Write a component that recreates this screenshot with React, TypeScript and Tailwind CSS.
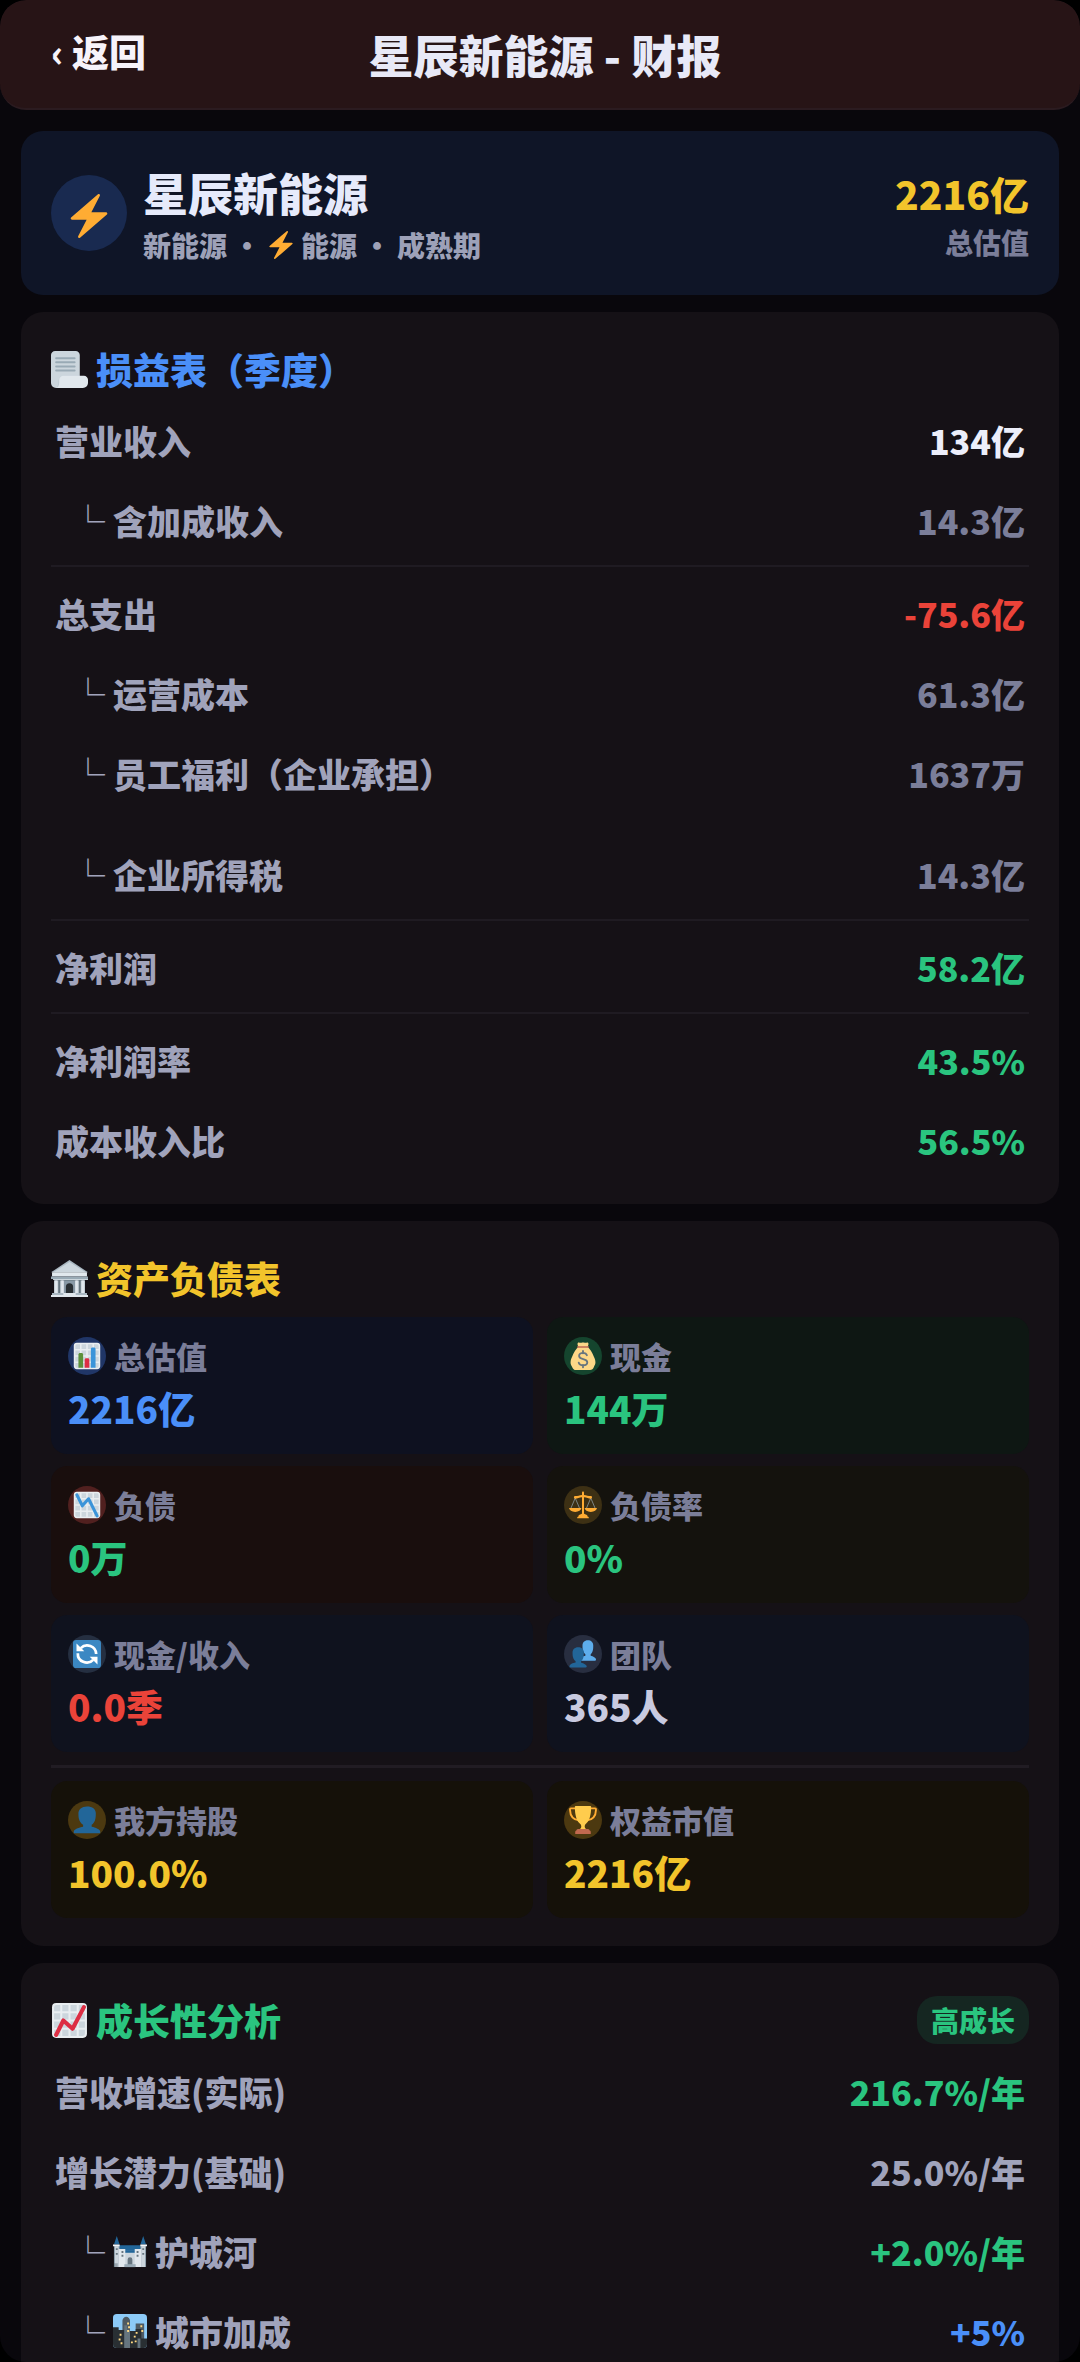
import type { ReactNode } from "react";

type IconProps = { className?: string };

function Svg({ className = "", children }: IconProps & { children: ReactNode }) {
  return (
    <svg viewBox="0 0 36 36" aria-hidden="true" className={`shrink-0 ${className}`}>
      {children}
    </svg>
  );
}

const Bolt = ({ className }: IconProps) => (
  <Svg className={className}>
    <path
      fill="#FFAC33"
      d="M32.938 15.651C32.792 15.26 32.418 15 32 15H19.925L26.89 1.458c.219-.426.106-.947-.271-1.243C26.437.071 26.218 0 26 0c-.233 0-.466.082-.653.243L18 6.588 3.347 19.243c-.316.273-.43.714-.284 1.105S3.582 21 4 21h12.075L9.11 34.542c-.219.426-.106.947.271 1.243.182.144.401.215.619.215.233 0 .466-.082.653-.243L18 29.412l14.653-12.655c.317-.273.43-.714.285-1.106z"
    />
  </Svg>
);

const Scroll = ({ className }: IconProps) => (
  <Svg className={className}>
    <path fill="#CCD6DD" d="M4 0h20c2.200 0 4 1.800 4 4v26H12v6H5c-2.800 0-5-2.200-5-5V4c0-2.200 1.800-4 4-4z" />
    <path fill="#B8C5CD" d="M7 31c0-3.500 2-7 5-7h16v3H12v9H5c1.500-1 2-3 2-5z" opacity=".6" />
    <path fill="#E1E8ED" d="M12 24h20c2.200 0 4 1.800 4 4v3c0 2.800-2.200 5-5 5H5c1.700 0 3-2 3-5v-3c0-2.200 1.800-4 4-4z" />
    <path stroke="#99AAB5" strokeWidth="1.900" strokeLinecap="round" d="M5 7h18M5 11h18M5 15h18M5 19h18" />
  </Svg>
);

const Bank = ({ className }: IconProps) => (
  <Svg className={className}>
    <path fill="#66757F" d="M3 18h30v15H3z" />
    <path fill="#AAB8C2" d="M18 0 0 12h36z" />
    <path fill="#CCD6DD" d="M18 2 2 12h32z" />
    <path fill="#E1E8ED" d="M1 12h34v4H1z" />
    <path fill="#99AAB5" d="M0 16h36v2.500H0z" />
    <path fill="#CCD6DD" d="M2 18.500h34v1H2zM3 20h4v13H3zM9 20h4v13H9zM23 20h4v13h-4zM29 20h4v13h-4z" />
    <path fill="#E1E8ED" d="M4 20h2v13H4zM10 20h2v13h-2zM24 20h2v13h-2zM30 20h2v13h-2z" />
    <path fill="#8899A6" d="M13 20h10v13H13z" />
    <path fill="#292F33" d="M14.500 33v-7a3.500 3.500 0 0 1 7 0v7z" />
    <path fill="#AAB8C2" d="M1 32h34v2H1z" />
    <path fill="#E1E8ED" d="M0 34h36v2H0zM12 32h12v2H12z" />
  </Svg>
);

const Sheet = () => (
  <>
    <rect x="1" y="1" width="34" height="34" rx="4" fill="#E9EEF1" />
    <path
      fill="#CCD6DD"
      d="M3 5a2 2 0 0 1 2-2h4v6H3zM11 3h6v6h-6zM19 3h6v6h-6zM27 3h4a2 2 0 0 1 2 2v4h-6zM3 11h6v6H3zM11 11h6v6h-6zM19 11h6v6h-6zM27 11h6v6h-6zM3 19h6v6H3zM11 19h6v6h-6zM19 19h6v6h-6zM27 19h6v6h-6zM3 27h6v6H5a2 2 0 0 1-2-2zM11 27h6v6h-6zM19 27h6v6h-6zM27 27h6v4a2 2 0 0 1-2 2h-4z"
    />
  </>
);

const BarChart = ({ className }: IconProps) => (
  <Svg className={className}>
    <Sheet />
    <path fill="#5C913B" d="M13 33H7V16c0-1.104.896-2 2-2h2c1.104 0 2 .896 2 2v17z" />
    <path fill="#DD2E44" d="M21 33h-6V23c0-1.104.896-2 2-2h2c1.104 0 2 .896 2 2v10z" />
    <path fill="#3B94D9" d="M29 33h-6V9c0-1.104.896-2 2-2h2c1.104 0 2 .896 2 2v24z" />
  </Svg>
);

const ChartDown = ({ className }: IconProps) => (
  <Svg className={className}>
    <Sheet />
    <path fill="none" stroke="#3B94D9" strokeWidth="4" strokeLinecap="round" strokeLinejoin="round" d="M5 5l7 14 8-9 11 22" />
  </Svg>
);

const ChartUp = ({ className }: IconProps) => (
  <Svg className={className}>
    <Sheet />
    <path fill="none" stroke="#DD2E44" strokeWidth="4" strokeLinecap="round" strokeLinejoin="round" d="M5 32l7-14 9 8L32 5" />
  </Svg>
);

const MoneyBag = ({ className }: IconProps) => (
  <Svg className={className}>
    <path
      fill="#FDD888"
      d="M12 6c-1-2-1.500-4-.500-5 1-1 3 .300 4.500 0 1.300-.300 3-.300 4.200 0 1.500.300 3.300-1 4.300 0 1 1 .5 3-.500 5 3 3 6 7.500 8 13 1 2.500 2 4 2 7.500 0 3-1.500 4-2 5.500-.8 2.500-2.500 3.500-5 4H9c-2.500 0-4-1.500-5-4-.8-1.500-2-2.800-2-5.500 0-3.500 1-5 2-7.500 2-5.500 5-10 8-13z"
    />
    <path fill="#BF6952" d="M11 5.500h14c1 0 1 2 0 2H11c-1 0-1-2 0-2z" />
    <path
      fill="none"
      stroke="#67757F"
      strokeWidth="2.400"
      strokeLinecap="round"
      d="M23 17c-.700-2-2.500-3-5-3-3 0-5 1.600-5 4 0 5.500 10.500 2.500 10.500 8 0 2.400-2.300 4-5.500 4-3 0-5-1.300-5.500-3.500M18 11.500v3M18 29.500v3"
    />
  </Svg>
);

const Scales = ({ className }: IconProps) => (
  <Svg className={className}>
    <path fill="none" stroke="#99AAB5" strokeWidth=".9" d="M8 9 2.500 22M8 9l5.500 13M28 9l-5.500 13M28 9l5.500 13" />
    <path
      fill="#FFAC33"
      d="M16.700 2.500C16.700 1 17.200.500 18 .500s1.300.5 1.300 2V5c3 .2 5.700 1.500 8.700 1.500 2.200 0 2.200 3.500 0 3.500-3 0-5-1.800-8.700-2v21c0 1.300 4.700 1 4.700 4 1 0 1.500.500 1.500 2H10.500c0-1.500.5-2 1.500-2 0-3 4.700-2.700 4.700-4V8C13 8.200 11 10 8 10 5.800 10 5.800 6.500 8 6.500c3 0 5.700-1.300 8.700-1.500zM0 22h16c-.5 3-3.500 5-8 5s-7.500-2-8-5zM20 22h16c-.5 3-3.500 5-8 5s-7.500-2-8-5z"
    />
  </Svg>
);

const Refresh = ({ className }: IconProps) => (
  <Svg className={className}>
    <rect width="36" height="36" rx="4" fill="#3B88C3" />
    <path fill="none" stroke="#fff" strokeWidth="3.500" d="M10 10.500A11.500 11.500 0 0 1 29.800 18M26 25.500A11.500 11.500 0 0 1 6.200 17" />
    <path fill="#fff" d="M4.500 4.500v10h10zM31.500 31.500v-10h-10z" />
  </Svg>
);

const personPath =
  "M24 26.800v-2.600c2-1.400 4-4.200 4.700-7.600.5-1.500.7-4.500.6-7.600C29.300 4 25 .500 18 .500S7 4.500 7 9.500c0 3 .200 5.700.7 7.100.8 3.400 3.300 6.200 5.300 7.600v2.500C8 27.300 1 30 1 33v1c0 1 1 1 2 1h30c1 0 2 0 2-1v-1c0-2.700-6-5.300-11-6.200z";

const Person = ({ className }: IconProps) => (
  <Svg className={className}>
    <path fill="#226699" d={personPath} />
  </Svg>
);

const People = ({ className }: IconProps) => (
  <Svg className={className}>
    <path fill="#5DADEC" transform="translate(13 0) scale(.62 .76)" d={personPath} />
    <path fill="#226699" transform="translate(0 9) scale(.65 .75)" d={personPath} />
  </Svg>
);

const Trophy = ({ className }: IconProps) => (
  <Svg className={className}>
    <path
      fill="none"
      stroke="#FFAC33"
      strokeWidth="2.400"
      strokeLinejoin="round"
      d="M10 3H2.500c-1 0-1.300.5-1.200 2C1.500 12 4 17.500 13 18.500M26 3h7.500c1 0 1.300.5 1.200 2C34.500 12 32 17.500 23 18.500"
    />
    <path fill="#FFCC4D" d="M7.500 1c0-.700.500-1 1-1h19c.5 0 1 .3 1 1 0 11-2.500 19-7 22-1 .800-1.300 2-1.300 3.500 0 2 1.300 3.500 3.300 3.500h-11c2 0 3.300-1.500 3.300-3.500 0-1.500-.3-2.700-1.300-3.500-4.500-3-7-11-7-22z" />
    <path fill="#C1694F" d="M11.500 29.500h13c1 0 2 1 2 2 1.500 0 1.500 1 1.500 4.500H8c0-3.500 0-4.500 1.500-4.500 0-1 1-2 2-2z" />
  </Svg>
);

const Castle = ({ className }: IconProps) => (
  <Svg className={className}>
    <path fill="#226699" d="M4 2 1 11h6zM32 2l-3 9h6zM6 12h24v6H6z" />
    <path fill="#8899A6" d="M1 12h6v23H1zM29 12h6v23h-6z" />
    <path fill="#CCD6DD" d="M2 13h4v22H2zM30 13h4v22h-4z" />
    <path fill="#F5F8FA" d="M0 11h7v2H0zM29 11h7v2h-7z" />
    <path fill="#E1E8ED" d="M6 16h7v1h10v-1h7v19H6z" />
    <path fill="#226699" d="M13 17h10v3H13z" />
    <path fill="#CCD6DD" d="M13 20h10v15H13z" />
    <path fill="#66757F" d="M15.500 33v-6a2.500 2.500 0 0 1 5 0v6zM3 15h2v2H3zM3 20h2v2H3zM9 18h2v2H9zM9 22h2v2H9zM25 18h2v2h-2zM25 22h2v2h-2zM31 15h2v2h-2zM31 20h2v2h-2z" />
    <path fill="#99AAB5" d="M12 32h12v3H12z" />
    <path fill="#66757F" d="M1 31h4v4H1z" opacity=".5" />
  </Svg>
);

const City = ({ className }: IconProps) => (
  <Svg className={className}>
    <rect width="36" height="36" rx="4" fill="#8CCAF7" />
    <path fill="#4E5A63" d="M10 36V7c0-2 2-4 4-4s4 2 4 4v29zM24 10h9v26h-9z" />
    <path fill="#66757F" d="M14 17h4v19h-4z" />
    <path fill="#292F33" d="M0 14h6v22H4a4 4 0 0 1-4-4zM6 17h6v19H6zM18 18h6v18h-6zM24 16h6v10h6v6a4 4 0 0 1-4 4h-8z" />
    <path fill="#66757F" d="M12 12h3v24h-3zM26 26h3v10h-3z" />
    <path
      fill="#FFD983"
      d="M15 9h2v2h-2zM16 13h2v2h-2zM15 17h2v2h-2zM7 21h2v2H7zM6 26h2v2H6zM8 30h2v2H8zM24 19h2v2h-2zM22 23h2v2h-2zM23 28h2v2h-2zM19 29h2v2h-2zM29 12h2v2h-2zM30 17h2v2h-2z"
    />
  </Svg>
);

function Card({ children, className = "" }: { children: ReactNode; className?: string }) {
  return <section className={`rounded-[22px] bg-[#151116] px-[30px] ${className}`}>{children}</section>;
}

function CardTitle({ icon, color, badge, children }: { icon: ReactNode; color: string; badge?: string; children: ReactNode }) {
  return (
    <div className="flex h-[50px] items-center justify-between">
      <h2 className={`flex items-center gap-2 text-[37px] leading-[50px] ${color}`}>
        {icon}
        {children}
      </h2>
      {badge && (
        <span className="rounded-[20px] bg-[#152621] px-[14px] text-[28px] leading-[48px] text-[#2ac47f]">{badge}</span>
      )}
    </div>
  );
}

function Row({ label, value, color, sub, icon }: { label: string; value: string; color: string; sub?: boolean; icon?: ReactNode }) {
  return (
    <div className="flex h-20 items-center justify-between px-1">
      <dt className={`flex items-center text-[34px] text-[#a0a3bb] ${sub ? "pl-4" : ""}`}>
        {sub && <span className="mr-2 font-normal">└</span>}
        {icon && <span className="mr-2">{icon}</span>}
        {label}
      </dt>
      <dd className={`text-[34px] ${color}`}>{value}</dd>
    </div>
  );
}

const Divider = () => <hr className="mt-[5px] mb-1.5 h-0.5 border-0 bg-[#1f1b22]" />;

function Tile({ icon, label, value, bg, ring, color }: { icon: ReactNode; label: string; value: string; bg: string; ring: string; color: string }) {
  return (
    <div className={`h-[137px] rounded-2xl px-[17px] pt-[19px] ${bg}`}>
      <dt className="flex h-10 items-center gap-2 text-[31px] text-[#7b7e99]">
        <span className={`flex size-[38px] items-center justify-center rounded-full ${ring}`}>{icon}</span>
        {label}
      </dt>
      <dd className={`mt-1 text-[37px] leading-[56px] ${color}`}>{value}</dd>
    </div>
  );
}

const green = "text-[#2ac47f]";
const red = "text-[#ea4339]";
const blue = "text-[#4a8ff8]";
const gold = "text-[#f2c42b]";
const gray = "text-[#a0a3bb]";
const muted = "text-[#7b7e99]";
const small = "size-7";

export default function App() {
  return (
    <div className="h-screen bg-black">
      <div className="flex h-full flex-col overflow-hidden rounded-[26px] bg-[#09070c] font-['Noto_Sans_CJK_SC',sans-serif] font-black">
        <header className="grid h-[110px] shrink-0 grid-cols-[1fr_auto_1fr] items-center rounded-[26px] border-b-2 border-[#2b1b20] bg-[#271416] pr-[41px] pl-[51px]">
          <button type="button" className="justify-self-start pb-1.5 text-[37px] leading-none text-[#f7f3fa]">
            ‹ 返回
          </button>
          <h1 className="text-[45px] leading-none text-[#e8e9f7]">星辰新能源 - 财报</h1>
        </header>

        <main className="flex min-h-0 flex-1 flex-col gap-[17px] overflow-y-auto px-[21px] pt-[21px] [scrollbar-width:none] *:shrink-0">
          <section className="flex h-[164px] items-center justify-between rounded-[22px] bg-[#0f1527] px-[30px]">
            <div className="flex items-center gap-4">
              <span className="flex size-[76px] items-center justify-center rounded-full bg-[#192a50] pt-1.5">
                <Bolt className="size-11" />
              </span>
              <div className="pt-2">
                <h2 className="text-[45px] leading-[56px] text-[#e6eafb]">星辰新能源</h2>
                <p className="flex items-center text-[28px] leading-[48px] text-[#9da1b8]">
                  <span>新能源</span>
                  <span className="w-10 text-center">•</span>
                  <Bolt className="mr-1.5 size-7" />
                  <span>能源</span>
                  <span className="w-10 text-center">•</span>
                  <span>成熟期</span>
                </p>
              </div>
            </div>
            <div className="pt-1 text-right">
              <p className="text-[39px] leading-[54px] text-[#f2c42b]">2216亿</p>
              <p className="text-[28px] leading-[44px] text-[#7b7e99]">总估值</p>
            </div>
          </section>

          <Card className="pt-8 pb-6">
            <CardTitle icon={<Scroll className="size-[37px]" />} color={blue}>
              损益表（季度）
            </CardTitle>
            <dl className="mt-1.5">
              <Row label="营业收入" value="134亿" color="text-[#eceefa]" />
              <Row sub label="含加成收入" value="14.3亿" color={muted} />
              <Divider />
              <Row label="总支出" value="-75.6亿" color={red} />
              <Row sub label="运营成本" value="61.3亿" color={muted} />
              <Row sub label="员工福利（企业承担）" value="1637万" color={muted} />
              <div className="mt-[21px]">
                <Row sub label="企业所得税" value="14.3亿" color={muted} />
              </div>
              <Divider />
              <Row label="净利润" value="58.2亿" color={green} />
              <Divider />
              <Row label="净利润率" value="43.5%" color={green} />
              <Row label="成本收入比" value="56.5%" color={green} />
            </dl>
          </Card>

          <Card className="pt-8 pb-7">
            <CardTitle icon={<Bank className="size-[37px]" />} color={gold}>
              资产负债表
            </CardTitle>
            <dl className="mt-[14px] grid grid-cols-2 gap-x-[14px] gap-y-3">
              <Tile icon={<BarChart className={small} />} label="总估值" value="2216亿" bg="bg-[#0e1120]" ring="bg-[#203667]" color={blue} />
              <Tile icon={<MoneyBag className={small} />} label="现金" value="144万" bg="bg-[#0e1713]" ring="bg-[#15452e]" color={green} />
              <Tile icon={<ChartDown className={small} />} label="负债" value="0万" bg="bg-[#190e0d]" ring="bg-[#51201f]" color={green} />
              <Tile icon={<Scales className={small} />} label="负债率" value="0%" bg="bg-[#14120d]" ring="bg-[#3d3014]" color={green} />
              <Tile icon={<Refresh className={small} />} label="现金/收入" value="0.0季" bg="bg-[#0f121e]" ring="bg-[#252f41]" color={red} />
              <Tile icon={<People className={small} />} label="团队" value="365人" bg="bg-[#0f121e]" ring="bg-[#282e40]" color="text-[#c8cae0]" />
            </dl>
            <hr className="my-[13px] h-[3px] border-0 bg-[#211c23]" />
            <dl className="grid grid-cols-2 gap-x-[14px]">
              <Tile icon={<Person className={small} />} label="我方持股" value="100.0%" bg="bg-[#151109]" ring="bg-[#4c3910]" color={gold} />
              <Tile icon={<Trophy className={small} />} label="权益市值" value="2216亿" bg="bg-[#151109]" ring="bg-[#4c3910]" color={gold} />
            </dl>
          </Card>

          <Card className="pt-8 pb-6">
            <CardTitle icon={<ChartUp className="size-[37px]" />} color={green} badge="高成长">
              成长性分析
            </CardTitle>
            <dl className="mt-1.5">
              <Row label="营收增速(实际)" value="216.7%/年" color={green} />
              <Row label="增长潜力(基础)" value="25.0%/年" color={gray} />
              <Row sub icon={<Castle className="size-[34px]" />} label="护城河" value="+2.0%/年" color={green} />
              <Row sub icon={<City className="size-[34px]" />} label="城市加成" value="+5%" color={blue} />
            </dl>
          </Card>
        </main>
      </div>
    </div>
  );
}
